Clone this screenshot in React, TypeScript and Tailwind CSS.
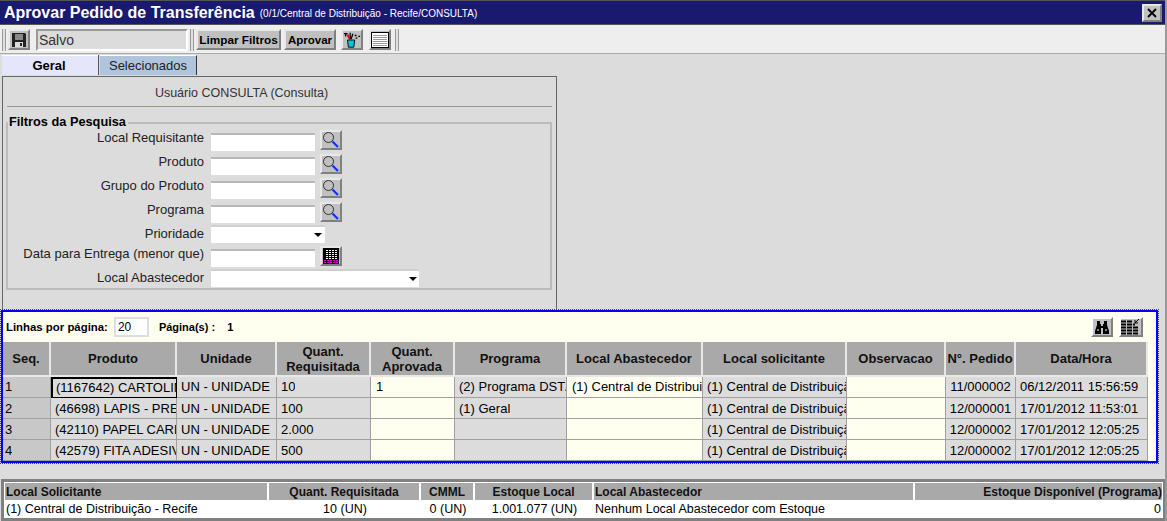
import React from "react";

const btn = "bg-[#c0c0c0] border-2 border-t-[#e8e8e8] border-l-[#e8e8e8] border-b-[#808080] border-r-[#808080] flex items-center justify-center";

const columns = [
  { title: ["Seq."] },
  { title: ["Produto"] },
  { title: ["Unidade"] },
  { title: ["Quant.", "Requisitada"] },
  { title: ["Quant.", "Aprovada"] },
  { title: ["Programa"] },
  { title: ["Local Abastecedor"] },
  { title: ["Local solicitante"] },
  { title: ["Observacao"] },
  { title: ["N°. Pedido"] },
  { title: ["Data/Hora"] },
];

const central = "(1) Central de Distribuição - Recife";

const rows = [
  ["1", "(1167642) CARTOLINA BRANCA", "UN - UNIDADE", "10", "1", "(2) Programa DST/AIDS", central, central, "", "11/000002", "06/12/2011 15:56:59"],
  ["2", "(46698) LAPIS - PRETO N2", "UN - UNIDADE", "100", "", "(1) Geral", "", central, "", "12/000001", "17/01/2012 11:53:01"],
  ["3", "(42110) PAPEL CARBONO", "UN - UNIDADE", "2.000", "", "", "", central, "", "12/000002", "17/01/2012 12:05:25"],
  ["4", "(42579) FITA ADESIVA", "UN - UNIDADE", "500", "", "", "", central, "", "12/000002", "17/01/2012 12:05:25"],
];

const filters = [
  { label: "Local Requisitante", kind: "search" },
  { label: "Produto", kind: "search" },
  { label: "Grupo do Produto", kind: "search" },
  { label: "Programa", kind: "search" },
  { label: "Prioridade", kind: "select" },
  { label: "Data para Entrega (menor que)", kind: "date" },
  { label: "Local Abastecedor", kind: "wide" },
];

function Grip() {
  return <div className="w-[4px] h-[22px] border-x border-x-[#999] bg-[#e0e0e0]" />;
}

function SaveIcon() {
  return (
    <svg width="16" height="16" viewBox="0 0 16 16">
      <path d="M1 1h13l1 1v13H1z" fill="#222" />
      <rect x="4" y="2" width="8" height="6" fill="#888" />
      <rect x="4" y="10" width="8" height="5" fill="#ddd" />
      <rect x="9" y="11" width="2" height="3" fill="#222" />
    </svg>
  );
}

function PaintIcon() {
  return (
    <svg width="20" height="18" viewBox="0 0 20 18">
      <path d="M5 9h8l-1 8H6z" fill="#00c8d8" stroke="#000" />
      <path d="M1 2h4M3 2v3M8 1v7M11 2l-2 6" stroke="#000" strokeWidth="1.4" fill="none" />
      <path d="M5 3l3 6" stroke="#d00" strokeWidth="2" />
      <path d="M13 4h2M17 5h2M14 7h2" stroke="#000" strokeWidth="1.4" />
    </svg>
  );
}

function ListIcon() {
  return (
    <svg width="18" height="16" viewBox="0 0 18 16">
      <rect x="0.5" y="0.5" width="17" height="15" fill="#fff" stroke="#000" />
      <path d="M2 3.5h14M2 5.5h14M2 7.5h14M2 9.5h14M2 11.5h14M2 13.5h14" stroke="#999" />
    </svg>
  );
}

function SearchIcon() {
  return (
    <svg width="18" height="18" viewBox="0 0 18 18">
      <circle cx="6.5" cy="6.5" r="5" fill="none" stroke="#222" strokeWidth="0.9" />
      <path d="M10.5 10.5l5.5 5.5" stroke="#1030ff" strokeWidth="2.2" />
    </svg>
  );
}

function CalendarIcon() {
  return (
    <svg width="16" height="16" viewBox="0 0 16 16">
      <rect width="16" height="16" fill="#000" />
      <path d="M3 2.5h12M3 4.5h12M3 6.5h12M3 8.5h12M3 10.5h12" stroke="#fff" strokeDasharray="2 1" />
      <path d="M1 12.5h14M1 14.5h14" stroke="#e000e0" strokeDasharray="2 1" />
    </svg>
  );
}

function BinocularsIcon() {
  return (
    <svg width="16" height="15" viewBox="0 0 16 15">
      <path d="M3 1h3v3h1v2h2V4h1V1h3v4l2 6v3h-6V8H7v6H1v-3l2-6z" fill="#000" />
      <path d="M3 10h2M11 10h2" stroke="#fff" />
    </svg>
  );
}

function ColumnsIcon() {
  return (
    <svg width="20" height="17" viewBox="0 0 20 17">
      <path d="M0 2.5h12M0 5.5h14M0 8.5h18M0 11.5h18M0 14.5h18" stroke="#000" strokeWidth="2" strokeDasharray="5 1" />
      <path d="M18 0l-4 4M14 1v3h3" stroke="#000" fill="none" />
    </svg>
  );
}

function Caret() {
  return <div className="w-0 h-0 border-x-[4px] border-x-transparent border-t-[4px] border-t-black" />;
}

function FilterRow({ label, kind }: { label: string; kind: string }) {
  const rowClass = kind === "select" ? "h-[20px]" : kind === "date" ? "h-[23px]" : "h-[24px]";
  const labelPad = kind === "wide" ? "pt-[2px]" : "pt-[1px]";
  return (
    <div className={"flex items-start " + rowClass}>
      <div className={"w-[196px] text-right text-[13px] text-[#222] whitespace-nowrap " + labelPad}>{label}</div>
      <div className="ml-[7px] flex gap-[5px] items-start">
        {kind === "select" && (
          <div className="w-[114px] h-[18px] -mt-[1px] bg-white border-t-2 border-t-[#d0d0d0] flex items-center justify-end pr-[3px]">
            <Caret />
          </div>
        )}
        {kind === "wide" && (
          <div className="w-[208px] h-[18px] bg-white border-t-2 border-t-[#d0d0d0] flex items-center justify-end pr-[2px]">
            <Caret />
          </div>
        )}
        {(kind === "search" || kind === "date") && (
          <div className="w-[104px] h-[18px] mt-[3px] bg-white border-t-2 border-t-[#b8b8b8]" />
        )}
        {kind === "search" && (
          <div className={btn + " w-[22px] h-[20px]"}>
            <SearchIcon />
          </div>
        )}
        {kind === "date" && (
          <div className={btn + " w-[22px] h-[20px]"}>
            <CalendarIcon />
          </div>
        )}
      </div>
    </div>
  );
}

export default function App() {
  return (
    <div className="w-[1167px] h-[521px] overflow-hidden bg-[#dcdcdc] font-['Liberation_Sans',Arial,sans-serif] text-[12px] leading-[14px] text-black border-r-2 border-r-[#999]">
      {/* title bar */}
      <div className="h-[25px] bg-[#191970] border-t border-t-[#555] border-b border-b-[#555] flex items-center pl-[4px] pr-[3px] text-white">
        <span className="font-bold text-[16px]">Aprovar Pedido de Transferência</span>
        <span className="ml-[5px] text-[10px] mt-[2px]">(0/1/Central de Distribuição - Recife/CONSULTA)</span>
        <div className={btn + " ml-auto w-[20px] h-[18px] text-[14px]"}>
          <svg width="10" height="10" viewBox="0 0 10 10"><path d="M1 1l8 8M9 1l-8 8" stroke="#000" strokeWidth="1.8" /></svg>
        </div>
      </div>

      {/* toolbar */}
      <div className="h-[29px] pt-[1px] bg-[#eeeeee] border-b border-b-[#aaa] flex items-center pl-[2px]">
        <Grip />
        <div className={btn + " ml-[2px] w-[22px] h-[21px]"}>
          <SaveIcon />
        </div>
        <div className="ml-[6px] w-[152px] h-[22px] bg-[#dcdcdc] border-2 border-t-[#999] border-l-[#999] border-b-white border-r-white text-[14px] flex items-center pl-[1px] text-[#333]">
          Salvo
        </div>
        <div className="ml-[2px]"><Grip /></div>
        <div className={btn + " ml-[2px] w-[85px] h-[21px] font-bold text-[11.75px]"}>Limpar Filtros</div>
        <div className={btn + " ml-[3px] w-[52px] h-[21px] font-bold text-[11.5px]"}>Aprovar</div>
        <div className={btn + " ml-[5px] w-[22px] h-[21px]"}><PaintIcon /></div>
        <div className={btn + " ml-[6px] w-[22px] h-[21px]"}><ListIcon /></div>
        <div className="ml-[4px]"><Grip /></div>
      </div>

      {/* tabs */}
      <div className="flex h-[22px] pt-[1px] pl-[2px] text-[13px]">
        <div className="w-[96px] h-[20px] pr-[2px] bg-[#e6e6fa] font-bold text-center leading-[20px] border-t border-t-white text-[13px]">Geral</div>
        <div className="w-[1px] h-[20px] bg-[#555] mr-[1px]" />
        <div className="w-[97px] h-[20px] bg-[#b0c4de] text-center leading-[20px] border-r border-r-[#333] border-t border-t-white text-[#222] text-[13px]">Selecionados</div>
      </div>

      {/* filter panel */}
      <div className="ml-[2px] w-[555px] h-[234px] border-t border-l border-r border-[#666] pt-[9px] px-[3px]">
        <div className="text-center text-[12.5px] text-[#333] h-[14px] pr-[76px]">Usuário CONSULTA (Consulta)</div>
        <div className="mt-[6px] h-[1px] bg-[#998] mx-[1px]" />
        <div className="relative mt-[15px] w-[546px] h-[168px] border-2 border-[#bbb] pt-[6px]">
          <div className="absolute -top-[9px] left-0 bg-[#dcdcdc] font-bold text-[12.75px] pr-[2px] pl-[1px]">Filtros da Pesquisa</div>
          {filters.map((f) => (
            <FilterRow key={f.label} label={f.label} kind={f.kind} />
          ))}
        </div>
      </div>

      {/* results grid */}
      <div className="ml-[1px] w-[1157px] h-[153px] border-2 border-[#0000ff] bg-[#fffff0] outline-1 outline-dotted outline-[#444] flex flex-col">
        <div className="h-[30px] flex items-center pl-[3px] pr-[13px] text-[11.4px]">
          <span className="font-bold">Linhas por página:</span>
          <div className="ml-[6px] w-[35px] h-[20px] bg-white border-2 border-[#ddd] text-[12px] pl-[2px] leading-[16px]">20</div>
          <span className="ml-[10px] font-bold text-[11px]">Página(s) :</span>
          <span className="ml-[12px] font-bold text-[11px]">1</span>
          <div className={btn + " ml-auto w-[22px] h-[20px] border-t-white border-l-white"}><BinocularsIcon /></div>
          <div className={btn + " ml-[6px] w-[24px] h-[20px] border-t-white border-l-white"}><ColumnsIcon /></div>
        </div>
        <div className="grid grid-cols-[48px_126px_100px_94px_84px_112px_136px_144px_99px_70px_132px] grid-rows-[35px_21px_21px_21px_21px] w-[1145px]">
          {columns.map((c) => (
            <div key={c.title[0]} className="bg-[#a9a9a9] border-r-2 border-r-[#e8e8e8] border-b-2 border-b-[#e8e8e8] flex flex-col items-center justify-center font-bold text-[13px] leading-[15px] text-[#111] whitespace-nowrap overflow-hidden">
              {c.title.map((t) => (
                <span key={t}>{t}</span>
              ))}
            </div>
          ))}
          {rows.map((r, ri) =>
            r.map((v, ci) => {
              const editable = ci === 4 || ci === 6 || ci === 8;
              const selected = ri === 0 && ci === 1;
              return (
                <div
                  key={ri + "-" + ci}
                  className={
                    "flex items-center overflow-hidden text-[13px] border-r border-b border-[#a0a0a0] " +
                    (ri > 0 ? "pt-[1px] " : "") +
                    (ci === 0 ? "bg-[#c8c8c8] pl-[2px] " : editable ? "bg-[#fffff0] pl-[5px] " : "bg-[#dcdcdc] pl-[4px] ") +
                    (ci === 9 ? "justify-center !pl-0 " : "") +
                    (selected ? "border-2 border-black !pl-[3px] " : "")
                  }
                >
                  <span className="block whitespace-nowrap overflow-hidden">{v}</span>
                </div>
              );
            })
          )}
        </div>
      </div>

      {/* stock detail */}
      <div className="mt-[16px] ml-[1px] w-[1165px] h-[42px] border-[3px] border-[#808080] bg-white p-[1px] text-[12.5px]">
        <div className="grid grid-cols-[264px_152px_54px_119px_321px_247px] grid-rows-[17px_18px]">
          <div className="bg-[#a9a9a9] border-r-2 border-r-white font-bold text-[12px] flex items-center pl-[1px] text-[#111]">Local Solicitante</div>
          <div className="bg-[#a9a9a9] border-r-2 border-r-white font-bold text-[12px] flex items-center justify-center text-[#111]">Quant. Requisitada</div>
          <div className="bg-[#a9a9a9] border-r-2 border-r-white font-bold text-[12px] flex items-center justify-center text-[#111]">CMML</div>
          <div className="bg-[#a9a9a9] border-r-2 border-r-white font-bold text-[12px] flex items-center justify-center text-[#111]">Estoque Local</div>
          <div className="bg-[#a9a9a9] border-r-2 border-r-white font-bold text-[12px] flex items-center pl-[1px] text-[#111]">Local Abastecedor</div>
          <div className="bg-[#a9a9a9] font-bold text-[12px] flex items-center justify-end text-[#111]">Estoque Disponível (Programa)</div>
          <div className="flex items-center pl-[1px]">{central}</div>
          <div className="flex items-center justify-center">10 (UN)</div>
          <div className="flex items-center justify-center">0 (UN)</div>
          <div className="flex items-center justify-center">1.001.077 (UN)</div>
          <div className="flex items-center pl-[1px]">Nenhum Local Abastecedor com Estoque</div>
          <div className="flex items-center justify-end pr-[1px]">0</div>
        </div>
      </div>
    </div>
  );
}
